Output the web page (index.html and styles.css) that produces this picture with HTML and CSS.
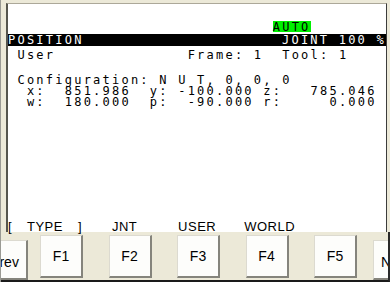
FILE: index.html
```html
<html>
  <head>
    <meta charset="utf-8">
    <title>Teach pendant - position</title>
    <link rel="stylesheet" href="styles.css">
  </head>

  <body>
    <div class="pendant">

      <div class="screen">
        <div class="row status">                            <span class="auto">AUTO</span></div>
        <div class="title"><span>POSITION</span><span>JOINT 100 %</span></div>
        <div class="row user"> User              Frame: 1  Tool: 1</div>
        <div class="row config"> Configuration: N U T, 0, 0, 0</div>
        <div class="row pos">  x:  851.986  y: -100.000 z:   785.046</div>
        <div class="row pos">  w:  180.000  p:  -90.000 r:     0.000</div>

        <!-- function key labels -->
        <div class="labels">
          <span class="lbl lbl1">[ TYPE ]</span>
          <span class="lbl lbl2">JNT</span>
          <span class="lbl lbl3">USER</span>
          <span class="lbl lbl4">WORLD</span>
          <span class="lbl"></span>
        </div>
      </div>

      <div class="keys">
        <div class="key side prev">Prev</div>
        <div class="key fkey first">F1</div>
        <div class="key fkey">F2</div>
        <div class="key fkey">F3</div>
        <div class="key fkey">F4</div>
        <div class="key fkey">F5</div>
        <div class="key side next">Next</div>
      </div>

    </div>
  </body>
</html>
```

FILE: styles.css
```css
body {
  margin: 0;
  width: 390px;
  height: 282px;
  overflow: hidden;
  background: #ece9d8;
}

.pendant {
  height: 282px;
  display: flex;
  flex-direction: column;
  box-sizing: border-box;
  border-left: 1px solid #9a9a94;
}

/* the LCD area, 40 columns of 9.45px */
.screen {
  margin: 3px 0 0 5px;
  width: 378px;
  height: 228px;
  flex: none;
  display: flex;
  flex-direction: column;
  background: #fff;
  border-top: 1px solid #aca899;
  border-left: 2px solid #55554d;
  border-right: 1px solid #3c3c3c;
  font-family: "DejaVu Sans Mono", monospace;
  font-size: 12px;
  letter-spacing: 2.23px;
  color: #000;
}

.row {
  white-space: pre;
  line-height: 11px;
  height: 11px;
}

.status {
  margin-top: 17px;
}

.auto {
  display: inline-block;
  height: 11px;
  line-height: 12px;
  background: #00f000;
}

.title {
  display: flex;
  justify-content: space-between;
  margin-top: 2px;
  height: 12px;
  line-height: 12px;
  background: #000;
  color: #fff;
  white-space: pre;
}

.user {
  margin-top: 3px;
  height: 12px;
  line-height: 12px;
}

.config {
  margin-top: 14px;
}

.labels {
  margin-top: auto;
  display: flex;
  height: 12px;
  line-height: 13px;
  font-family: "Liberation Sans", Arial, sans-serif;
  font-size: 13px;
  letter-spacing: 0.5px;
  white-space: pre;
}

.lbl {
  width: 75.6px;
  flex: none;
  box-sizing: border-box;
}

.lbl1 {
  word-spacing: 11px;
}

.lbl2 {
  padding-left: 28.35px;
}

.lbl3 {
  padding-left: 18.9px;
}

.lbl4 {
  padding-left: 9.45px;
}

/* soft keys under the screen */
.keys {
  flex: 1;
  display: flex;
  align-items: flex-start;
  overflow: hidden;
  border-bottom: 2px solid #1a1a1a;
  border-right: 2px solid #2a2a2a;
}

.key {
  flex: none;
  display: flex;
  align-items: center;
  justify-content: center;
  box-sizing: border-box;
  background: #fdfdfb;
  border-style: solid;
  border-width: 1px 2px 2px 1px;
  border-color: #dcdad0 #85847c #85847c #dcdad0;
  font-family: "Liberation Sans", Arial, sans-serif;
  font-size: 14px;
  color: #000;
}

.fkey {
  width: 43px;
  height: 43px;
  margin-top: 3px;
  margin-left: 25.5px;
}

.fkey.first {
  margin-left: 12px;
}

.side {
  width: 46px;
  height: 40px;
  margin-top: 8px;
  padding-top: 4px;
}

.prev {
  margin-left: -19px;
}

.next {
  margin-left: 16px;
}
```
